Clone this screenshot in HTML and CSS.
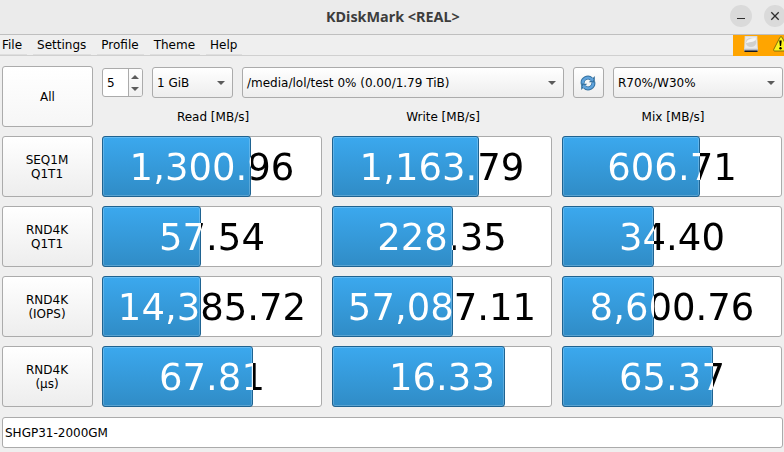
FILE: index.html
```
<!DOCTYPE html>
<html lang="en">
<head>
    <meta charset="UTF-8">
    <meta name="viewport" content="width=device-width, initial-scale=1.0">
    <title>KDiskMark</title>
    <link rel="stylesheet" href="styles.css">
</head>
<body>
    <header class="titlebar">
        <h1>KDiskMark &lt;REAL&gt;</h1>
        <div class="window-buttons">
            <button class="window-btn" aria-label="Minimize">
                <svg width="22" height="22" viewBox="0 0 22 22"><path d="M7 13.500h8" stroke="#2e2e2e" stroke-width="1"/></svg>
            </button>
            <button class="window-btn" aria-label="Close">
                <svg width="22" height="22" viewBox="0 0 22 22"><path d="M7.3 7.3l7.4 7.4M14.7 7.3l-7.4 7.4" stroke="#2e2e2e" stroke-width="1.3"/></svg>
            </button>
        </div>
    </header>

    <nav class="menubar">
        <span class="menu-item">File</span>
        <span class="menu-item">Settings</span>
        <span class="menu-item">Profile</span>
        <span class="menu-item">Theme</span>
        <span class="menu-item">Help</span>
        <div class="status">
            <svg class="disk-icon" width="14" height="16" viewBox="0 0 14 16">
                <path d="M.7 0h12.6L14 13.5H0z" fill="#d8d8d8"/>
                <path d="M1.5.8h11l.5 11.5H1z" fill="#e9e9e9"/>
                <ellipse cx="7" cy="6.5" rx="5.2" ry="4.6" fill="#d0d0cd"/>
                <path d="M2 7C3 3 8 1.5 12 2.5 11.500 6 7 6 2 7z" fill="#f5f5f5"/>
                <path d="M0 13h14v2H0z" fill="#b9bdc6"/>
                <path d="M.5 14.500h13V16H.5z" fill="#17191f"/>
            </svg>
            <svg class="warn-icon" width="16" height="16" viewBox="0 0 16 16">
                <path d="M7 1.200Q8 0 9 1.200L15.300 13.500Q15.500 15 14.500 15H1.500Q.5 15 .7 13.500z" fill="#fcf51f" stroke="#5e5a12" stroke-width=".8"/>
                <path d="M6.300 4.500h2.400L8.100 10H6.900z"/>
                <circle cx="7.500" cy="12.300" r="1.200"/>
            </svg>
        </div>
    </nav>

    <main>
        <div class="row toolbar">
            <button class="test-btn">All</button>
            <div class="options">
                <div class="controls">
                    <div class="spinbox">
                        <span>5</span>
                        <div class="steps">
                            <svg width="8" height="4" viewBox="0 0 8 4"><path d="M0 4L4 0 8 4z"/></svg>
                            <svg width="8" height="4" viewBox="0 0 8 4"><path d="M0 0L4 4 8 0z"/></svg>
                        </div>
                    </div>
                    <div class="combo size">1 GiB</div>
                    <div class="combo target">/media/lol/test 0% (0.00/1.79 TiB)</div>
                    <button class="refresh" aria-label="Refresh">
                        <svg width="16" height="16" viewBox="0 0 16 16">
                            <g fill="none" stroke="#33709f" stroke-width="4">
                                <path d="M2.800 9A5.200 5.200 0 0 1 11.500 4.100"/>
                                <path d="M13.200 7A5.200 5.200 0 0 1 4.500 11.900"/>
                            </g>
                            <path d="M14.800 1v6.300H8.800z" fill="#33709f"/>
                            <path d="M1.200 15V8.700h6z" fill="#33709f"/>
                            <g fill="none" stroke="#5fa3dc" stroke-width="2.400">
                                <path d="M2.800 8.500A5.200 5.200 0 0 1 11.500 4.100L13 5.500"/>
                                <path d="M13.200 7.500A5.200 5.200 0 0 1 4.500 11.900L3 10.500"/>
                            </g>
                        </svg>
                    </button>
                    <div class="combo mix">R70%/W30%</div>
                </div>
                <div class="headings">
                    <span>Read [MB/s]</span>
                    <span>Write [MB/s]</span>
                    <span>Mix [MB/s]</span>
                </div>
            </div>
        </div>

        <div class="row">
            <button class="test-btn">SEQ1M<br>Q1T1</button>
            <div class="bar" style="--fill: 149px"><span>1,300.96</span></div>
            <div class="bar" style="--fill: 147px"><span>1,163.79</span></div>
            <div class="bar" style="--fill: 138px"><span>606.71</span></div>
        </div>
        <div class="row">
            <button class="test-btn">RND4K<br>Q1T1</button>
            <div class="bar" style="--fill: 99px"><span>57.54</span></div>
            <div class="bar" style="--fill: 121px"><span>228.35</span></div>
            <div class="bar" style="--fill: 92px"><span>34.40</span></div>
        </div>
        <div class="row">
            <button class="test-btn">RND4K<br>(IOPS)</button>
            <div class="bar" style="--fill: 99px"><span>14,385.72</span></div>
            <div class="bar" style="--fill: 121px"><span>57,087.11</span></div>
            <div class="bar" style="--fill: 92px"><span>8,600.76</span></div>
        </div>
        <div class="row">
            <button class="test-btn">RND4K<br>(µs)</button>
            <div class="bar" style="--fill: 151px"><span>67.81</span></div>
            <div class="bar" style="--fill: 173px"><span>16.33</span></div>
            <div class="bar" style="--fill: 151px"><span>65.37</span></div>
        </div>

        <div class="device">SHGP31-2000GM</div>
    </main>
</body>
</html>
```
FILE: styles.css
```
*, *::before {
    box-sizing: border-box;
}
body {
    margin: 0;
    height: 452px;
    overflow: hidden;
    background: #efefef;
    color: #000;
    font: 12px/14px "DejaVu Sans", sans-serif;
}
button {
    font: inherit;
    color: inherit;
    padding: 0;
}

/* window frame */
.titlebar {
    display: flex;
    height: 35px;
    padding-left: 326px;
    background: #ebebeb;
    border-bottom: 1px solid #bfbfbf;
}
.titlebar h1 {
    margin: 0;
    flex: none;
    width: 160px;
    color: #3d3d3d;
    font: bold 14.4px/34px "Noto Sans", sans-serif;
    white-space: nowrap;
}
.window-buttons {
    display: flex;
    flex: none;
    gap: 12px;
    margin: 5px 0 0 244px;
}
.window-btn {
    width: 22px;
    height: 22px;
    border: none;
    border-radius: 50%;
    background: #dadada;
}
.window-btn svg {
    display: block;
}

.menubar {
    display: flex;
    height: 21px;
    gap: 6px;
    border-bottom: 1px solid #d0d0d0;
    line-height: 20px;
    white-space: nowrap;
}
.menu-item {
    height: 20px;
    padding: 0 5px 0 4px;
    border-bottom: 1px solid #dedede;
}
.menu-item:first-child {
    padding-left: 2px;
}
.status {
    display: flex;
    flex: none;
    width: 51px;
    height: 21px;
    margin-left: auto;
    padding: 1px 0 0 11px;
    gap: 15px;
    background: #ffa500;
    overflow: hidden;
}
.status svg {
    flex: none;
}

main {
    display: flex;
    flex-direction: column;
    gap: 9px;
    padding: 10px 0 0 2px;
}
.row {
    display: flex;
    gap: 10px;
    height: 61px;
}
.test-btn {
    flex: none;
    width: 91px;
    height: 61px;
    margin-right: -1px;
    padding-right: 1px;
    border: 1px solid #ababab;
    border-radius: 3px;
    background: linear-gradient(#fff, #ededed);
}
.toolbar .test-btn {
    padding-right: 0;
    background: linear-gradient(#fff, #f6f6f6);
}

/* selectors above the results */
.options {
    flex: none;
    width: 681px;
}
.controls {
    display: flex;
    align-items: center;
    gap: 9px;
    height: 31px;
    margin-top: 1px;
}
.spinbox, .combo, .refresh, .device {
    border: 1px solid #ababab;
    border-radius: 3px;
    height: 31px;
}
.spinbox {
    display: flex;
    width: 41px;
    height: 29px;
    line-height: 28px;
    padding-left: 4px;
    background: #fff;
}
.spinbox span {
    flex: 1;
}
.steps {
    display: flex;
    flex-direction: column;
    align-items: center;
    justify-content: center;
    gap: 8px;
    width: 14px;
    padding-right: 1px;
    border-left: 1px solid #ababab;
    background: linear-gradient(#fdfdfd, #f0f0f0);
    border-radius: 0 2px 2px 0;
}
.steps svg {
    fill: #5b5b5b;
}
.combo {
    display: flex;
    align-items: center;
    justify-content: space-between;
    padding: 0 7px 0 4px;
    background: linear-gradient(#fff, #ededed);
}
.combo::after {
    content: "";
    border: 4px solid transparent;
    border-top-color: #5b5b5b;
    border-bottom: none;
}
.size {
    width: 81px;
}
.target {
    width: 322px;
}
.mix {
    width: 170px;
}
.refresh {
    display: flex;
    align-items: center;
    justify-content: center;
    width: 31px;
    padding-right: 1px;
    background: linear-gradient(#fff, #ededed);
}
.headings {
    display: flex;
    gap: 10px;
    margin-top: 12px;
    text-align: center;
}
.headings span {
    width: 220px;
    padding-left: 2px;
}

/* results, --fill is the filled width of the bar */
.bar {
    position: relative;
    width: 220px;
    border: 1px solid #ababab;
    border-radius: 3px;
    background: #fff;
}
.bar::before {
    content: "";
    position: absolute;
    top: -1px;
    left: -1px;
    width: var(--fill);
    height: 61px;
    border: 1px solid #1f6391;
    border-radius: 3px;
    background: linear-gradient(#3ba8ee, #308cc6);
    box-shadow: inset 0 0 0 1px rgba(255, 255, 255, 0.2);
}
.bar span {
    position: relative;
    display: block;
    margin: -1px;
    background: linear-gradient(to right, #fff var(--fill), #000 var(--fill));
    background-clip: text;
    -webkit-background-clip: text;
    color: transparent;
    font-size: 37px;
    line-height: 63px;
    text-align: center;
}

.device {
    width: 781px;
    margin-top: 1px;
    padding-left: 2px;
    line-height: 30px;
    background: #fff;
}
```
